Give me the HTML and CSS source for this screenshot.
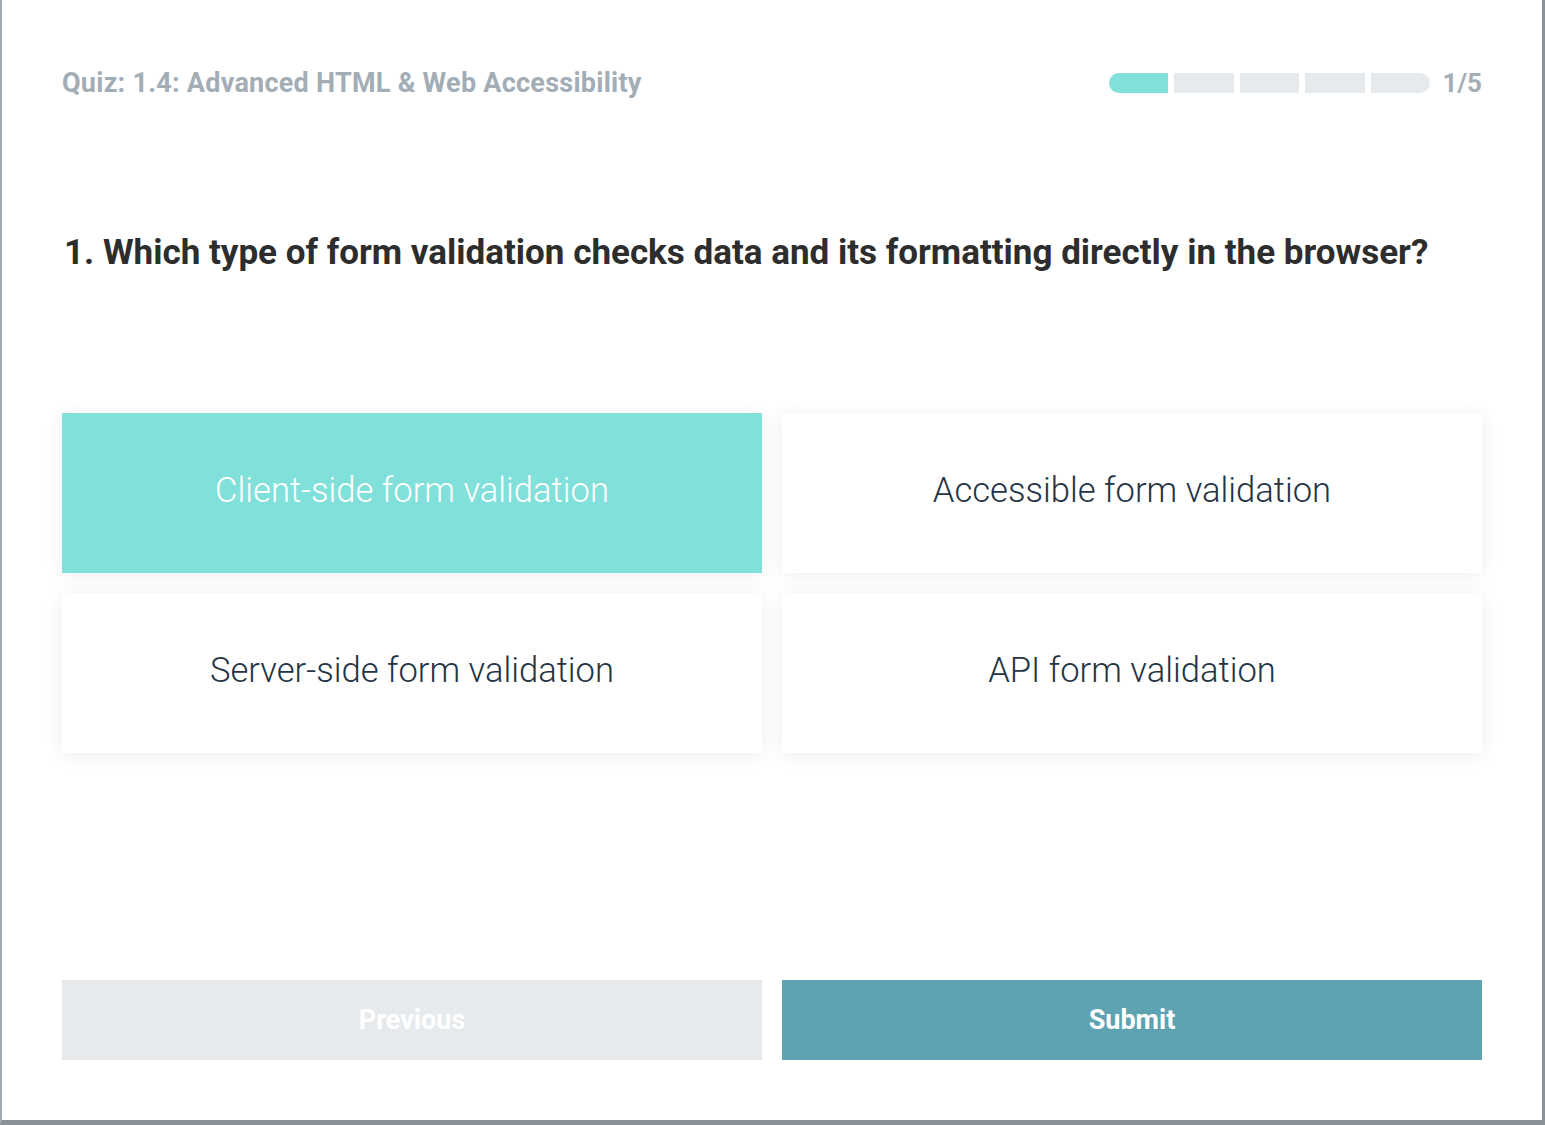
FILE: index.html
```html
<!DOCTYPE html>
<html>
<head>
<meta charset="utf-8">
<link rel="stylesheet" href="styles.css">
</head>
<body>
<div class="frame">
  <div class="quiz">
    <header class="top">
      <div class="title">Quiz: 1.4: Advanced HTML &amp; Web Accessibility</div>
      <div class="progress">
        <div class="bar">
          <span class="seg done"></span>
          <span class="seg"></span>
          <span class="seg"></span>
          <span class="seg"></span>
          <span class="seg"></span>
        </div>
        <div class="count">1/5</div>
      </div>
    </header>
    <h1 class="question">1. Which type of form validation checks data and its formatting directly in the browser?</h1>
    <div class="answers">
      <div class="answer selected">Client-side form validation</div>
      <div class="answer">Accessible form validation</div>
      <div class="answer">Server-side form validation</div>
      <div class="answer">API form validation</div>
    </div>
    <div class="actions">
      <button class="btn prev">Previous</button>
      <button class="btn submit">Submit</button>
    </div>
  </div>
</div>
</body>
</html>
```
FILE: styles.css
```css
html, body {
  margin: 0;
  padding: 0;
  height: 100%;
}
body {
  background: #8a9199;
  font-family: Roboto, "Liberation Sans", sans-serif;
}
.frame {
  box-sizing: border-box;
  width: 1545px;
  height: 1125px;
  border-left: 2px solid #a3adb6;
  border-right: 3px solid #8a9199;
  border-bottom: 5px solid #8a9199;
  background: #fff;
}
.quiz {
  box-sizing: border-box;
  padding: 0 60px;
  height: 100%;
  display: flex;
  flex-direction: column;
}
.top {
  display: flex;
  justify-content: space-between;
  align-items: center;
  height: 166px;
}
.title {
  font-size: 27px;
  font-weight: 700;
  color: #a3adb6;
  letter-spacing: 0.25px;
}
.progress {
  display: flex;
  align-items: center;
  gap: 12px;
}
.bar {
  display: flex;
  gap: 6px;
  width: 322px;
}
.seg {
  flex: 1;
  height: 20px;
  background: #e6eaed;
}
.seg:first-child { border-radius: 10px 0 0 10px; }
.seg:last-child { border-radius: 0 10px 10px 0; }
.seg.done { background: #82e0da; }
.count {
  font-size: 26px;
  font-weight: 700;
  color: #a3adb6;
}
.question {
  margin: 67px 0 0 2px;
  font-size: 35px;
  font-weight: 700;
  color: #2d2d2d;
  line-height: 40px;
}
.answers {
  margin-top: 140px;
  display: grid;
  grid-template-columns: 1fr 1fr;
  gap: 20px;
}
.answer {
  height: 160px;
  display: flex;
  align-items: center;
  justify-content: center;
  padding-bottom: 6px;
  box-sizing: border-box;
  font-size: 34.6px;
  font-weight: 300;
  color: #253445;
  background: #fff;
  box-shadow: 0 2px 18px rgba(0, 0, 0, 0.07);
}
.answer.selected {
  background: #82e0da;
  color: #fff;
}
.actions {
  margin-top: auto;
  margin-bottom: 60px;
  display: grid;
  grid-template-columns: 1fr 1fr;
  gap: 20px;
}
.btn {
  height: 80px;
  border: none;
  font-family: inherit;
  font-size: 27px;
  font-weight: 700;
  color: #fff;
  cursor: pointer;
}
.btn.prev { background: #e6eaed; }
.btn.submit { background: #5ea3b2; }
```
